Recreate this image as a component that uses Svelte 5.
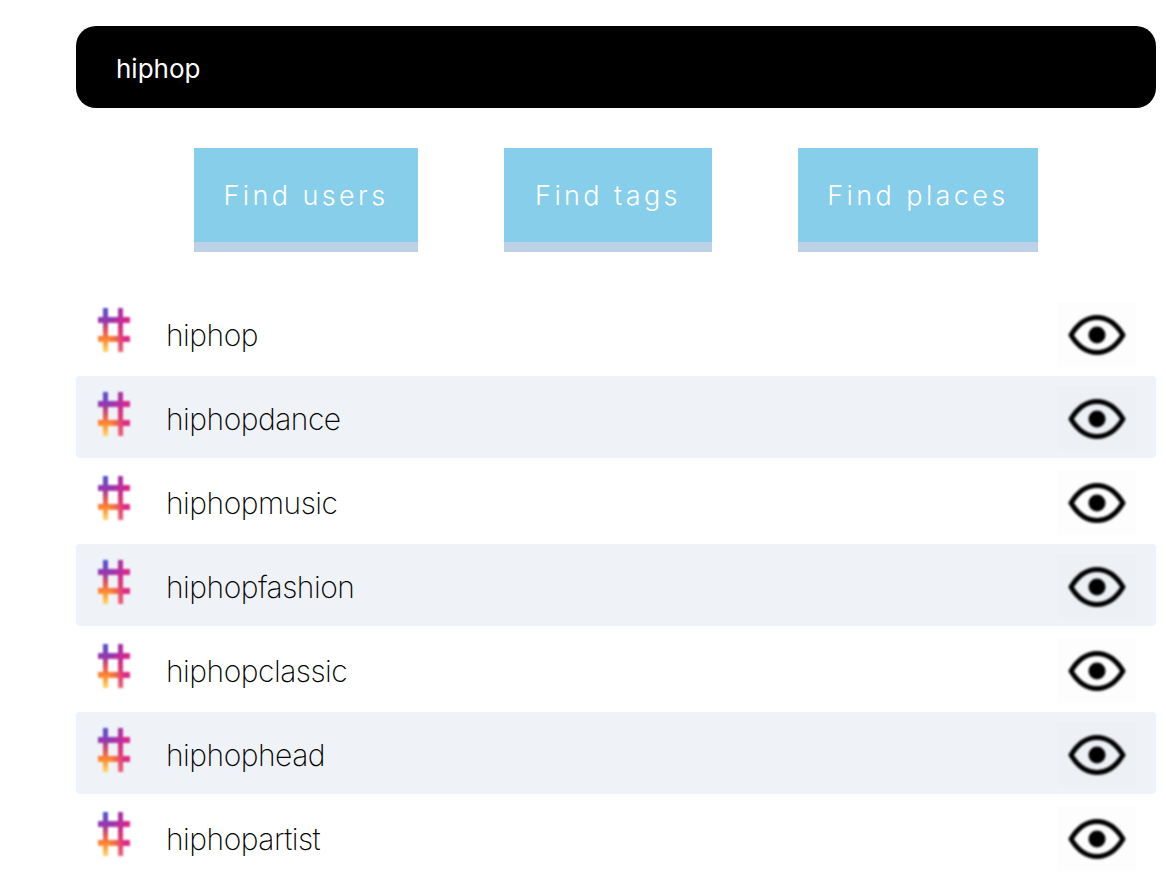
<script>
  const tags = [
    'hiphop',
    'hiphopdance',
    'hiphopmusic',
    'hiphopfashion',
    'hiphopclassic',
    'hiphophead',
    'hiphopartist'
  ];
  const actions = ['Find users', 'Find tags', 'Find places'];

  // hash glyph outline, drawn twice to layer the two gradients
  const hashPath =
    'M5 0h5v9h10V0h5v9h7v6h-7v13h7v6h-7v10h-5V34H10v10H5V34H0v-6h5V15H0V9h5zM10 15v13h10V15z';
</script>

<main class="page">
  <input class="search" type="text" value="hiphop" aria-label="Search" />

  <div class="actions">
    {#each actions as action}
      <button class="action" type="button">{action}</button>
    {/each}
  </div>

  <svg class="defs" aria-hidden="true">
    <defs>
      <linearGradient id="hash-base" x1="0" y1="0" x2="0" y2="1">
        <stop offset="0" stop-color="#4a56d0" />
        <stop offset="0.3" stop-color="#9a36ac" />
        <stop offset="0.55" stop-color="#e85a50" />
        <stop offset="0.72" stop-color="#ff8a30" />
        <stop offset="1" stop-color="#ffd860" />
      </linearGradient>
      <linearGradient id="hash-tint" x1="0" y1="0" x2="1" y2="0">
        <stop offset="0.4" stop-color="#d8258f" stop-opacity="0" />
        <stop offset="0.85" stop-color="#d8258f" stop-opacity="0.95" />
        <stop offset="1" stop-color="#e0287f" stop-opacity="0.95" />
      </linearGradient>
    </defs>
  </svg>

  <ul class="results">
    {#each tags as tag}
      <li class="row">
        <svg class="hash" viewBox="0 0 32 44" aria-hidden="true">
          <path fill="url(#hash-base)" d={hashPath} />
          <path fill="url(#hash-tint)" d={hashPath} />
        </svg>
        <span class="name">{tag}</span>
        <button class="view" type="button" aria-label="View {tag}">
          <svg viewBox="0 0 58 42" width="58" height="42" aria-hidden="true">
            <path
              d="M3 21C10 9.500 19 3.500 29 3.500S48 9.500 55 21C48 32.500 39 38.500 29 38.500S10 32.500 3 21z"
              fill="none"
              stroke="#000"
              stroke-width="5"
              stroke-linejoin="round"
            />
            <circle cx="29" cy="21" r="8.500" fill="#000" />
          </svg>
        </button>
      </li>
    {/each}
  </ul>
</main>

<style>
  :global(body) {
    background: #fff;
    overflow: hidden;
  }

  .page {
    box-sizing: border-box;
    width: 1080px;
    margin-left: 76px;
    padding-top: 26px;
    font-family: Inter, 'Noto Sans', sans-serif;
  }

  .search {
    display: block;
    box-sizing: border-box;
    width: 100%;
    height: 82px;
    padding: 2px 40px 0;
    border: none;
    border-radius: 20px;
    outline: none;
    background: #000;
    color: #fff;
    font-family: inherit;
    font-size: 26px;
    font-weight: 400;
  }

  .actions {
    display: grid;
    grid-template-columns: 224px 208px 240px;
    justify-content: center;
    column-gap: 86px;
    margin-top: 40px;
  }

  .action {
    box-sizing: border-box;
    height: 104px;
    padding: 1px 0 0;
    border: none;
    border-bottom: 10px solid #bcd1e6;
    background: #87ceeb;
    color: #fff;
    font-family: inherit;
    font-size: 27px;
    font-weight: 300;
    letter-spacing: 3.4px;
  }

  .defs {
    position: absolute;
    width: 0;
    height: 0;
  }

  .results {
    display: flex;
    flex-direction: column;
    gap: 2px;
    margin: 40px 0 0;
    padding: 0;
    list-style: none;
  }

  .row {
    display: flex;
    align-items: center;
    height: 82px;
    border-radius: 4px;
  }

  .row:nth-child(even) {
    background: #eff2f7;
  }

  .hash {
    width: 32px;
    height: 44px;
    margin: -6px 0 0 22px;
    filter: blur(0.9px);
  }

  .name {
    flex: 1;
    margin: 4px 0 0 36px;
    color: #000;
    font-size: 30px;
    font-weight: 200;
    letter-spacing: -0.5px;
  }

  .view {
    display: flex;
    align-items: center;
    justify-content: center;
    width: 79px;
    height: 65px;
    margin: 3px 20px 0 0;
    padding: 0;
    border: none;
    background: #fdfdfe;
  }

  .row:nth-child(even) .view {
    background: #edf0f5;
  }

  .view svg {
    filter: blur(0.8px);
  }
</style>
